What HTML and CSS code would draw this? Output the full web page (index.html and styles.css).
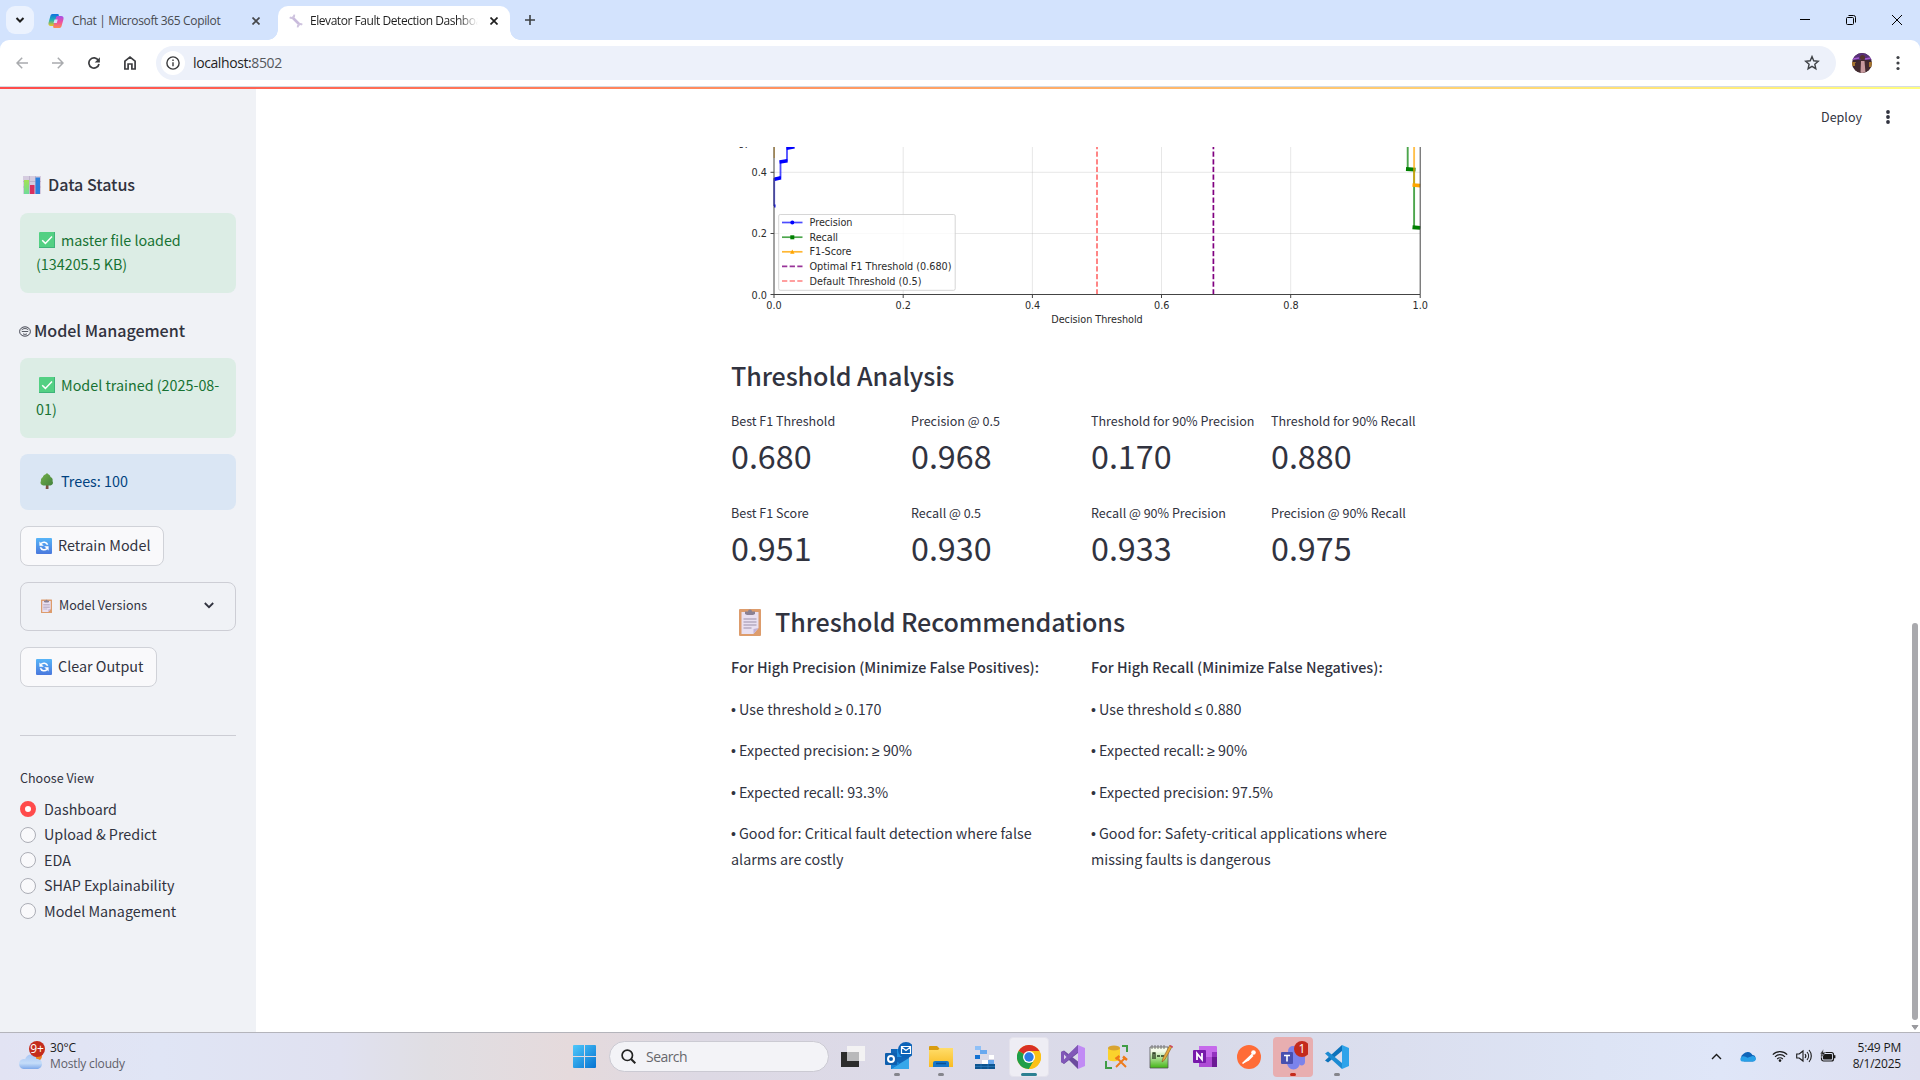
FILE: index.html
```html
<!DOCTYPE html>
<html lang="en">
<head>
<meta charset="utf-8">
<title>Elevator Fault Detection Dashboard</title>
<link rel="stylesheet" href="styles.css">
</head>
<body>
<svg width="0" height="0" class="defs">
  <defs>
    <linearGradient id="gBlue" x1="0" y1="0" x2="0" y2="1"><stop offset="0" stop-color="#57b5f8"/><stop offset="1" stop-color="#4a78dd"/></linearGradient>
    <linearGradient id="gGreenBar" x1="0" y1="0" x2="0" y2="1"><stop offset="0" stop-color="#a3e254"/><stop offset="1" stop-color="#6fdc9a"/></linearGradient>
    <linearGradient id="gTree" x1="0" y1="0" x2="1" y2="1"><stop offset="0" stop-color="#74b04a"/><stop offset="1" stop-color="#43823c"/></linearGradient>
    <linearGradient id="gWin" x1="0" y1="0" x2="1" y2="1"><stop offset="0" stop-color="#4fc8fb"/><stop offset="1" stop-color="#0673d1"/></linearGradient>
    <linearGradient id="gCloud" x1="0" y1="0" x2="0" y2="1"><stop offset="0" stop-color="#a9c6f5"/><stop offset=".6" stop-color="#c5ddf9"/><stop offset="1" stop-color="#7fa9ea"/></linearGradient>
    <linearGradient id="gFolder" x1="0" y1="0" x2="0" y2="1"><stop offset="0" stop-color="#ffdd6b"/><stop offset="1" stop-color="#f9bb21"/></linearGradient>
    <linearGradient id="gNote" x1="0" y1="0" x2="0" y2="1"><stop offset=".2" stop-color="#f4fbe9"/><stop offset="1" stop-color="#42b514"/></linearGradient>
    <linearGradient id="gCopA" x1="0" y1="0" x2="0" y2="1"><stop offset="0" stop-color="#0f6fe0"/><stop offset=".5" stop-color="#1cb2b4"/><stop offset="1" stop-color="#f2c51c"/></linearGradient>
    <linearGradient id="gCopB" x1="0" y1="0" x2="0" y2="1"><stop offset="0" stop-color="#a451e8"/><stop offset=".5" stop-color="#ef4fa0"/><stop offset="1" stop-color="#fb8c4e"/></linearGradient>
    <symbol id="check" viewBox="0 0 16 16"><rect width="16" height="16" rx="1" fill="#53d083"/><path d="M15 0h1v16H0v-1h15z" fill="#3fb37a"/><path d="M3.2 8.2l3.2 3.2 6.6-6.8" fill="none" stroke="#fff" stroke-width="1.5"/></symbol>
    <symbol id="cycle" viewBox="0 0 16 16"><rect width="16" height="16" rx="1" fill="url(#gBlue)"/><path d="M5 5.600a3.900 3.900 0 0 1 6.600 1.200M11 10.400a3.900 3.900 0 0 1-6.600-1.200" fill="none" stroke="#fff" stroke-width="1.600"/><path d="M3.400 3.400v4.400h4.400zM12.600 12.600V8.200H8.200z" fill="#fff"/></symbol>
    <symbol id="clip" viewBox="0 0 22 28"><rect y="1" width="22" height="27" rx="1" fill="#dd9c6c"/><path d="M2.500 4h17v16l-5 6h-12z" fill="#e9e0f1"/><path d="M19.500 20l-5 6v-5z" fill="#c3b2d6"/><path d="M6 6V3.400h3a2 2 0 0 1 4 0h3V6l-2 1H8z" fill="#8b8193"/><path d="M4.500 11h13M4.500 14h13M4.500 17h13M4.500 20h8" stroke="#9b8fa8" stroke-width="1"/></symbol>
  </defs>
</svg>

<header class="tabstrip">
  <span class="tab-search"><svg width="10" height="10" viewBox="0 0 10 10"><path d="M1.500 3l3.500 3.500L8.500 3" fill="none" stroke="#1f1f1f" stroke-width="2"/></svg></span>
  <div class="tab tab-idle">
    <svg width="16" height="16" viewBox="0 0 16 16"><path d="M4.500 1h5.200c1 0 1.400.8 1.100 1.700L8 11.600C7.700 12.600 7 13 6 13H2.800C.8 13 0 11.500.6 9.600L2.400 3C2.700 1.700 3.400 1 4.500 1z" fill="url(#gCopA)"/><path d="M11.500 15H6.300c-1 0-1.400-.8-1.100-1.700L8 4.400C8.300 3.400 9 3 10 3h3.200c2 0 2.800 1.500 2.200 3.400L13.600 13c-.3 1.300-1 2-2.100 2z" fill="url(#gCopB)"/><path d="M6.500 6.500h3.200L8.800 10H5.500z" fill="#d3e3fd"/></svg>
    <span class="tab-title">Chat | Microsoft 365 Copilot</span>
    <svg class="x" width="8" height="8" viewBox="0 0 8 8"><path d="M.5.5l7 7m0-7l-7 7" stroke="#45474a" stroke-width="1.700"/></svg>
  </div>
  <div class="tab tab-active">
    <svg width="14" height="14" viewBox="0 0 14 14"><path d="M3.500 3.500l7 7" stroke="#c9bbdc" stroke-width="2.600"/><path d="M.8 3.200a2.700 2.700 0 0 0 4.400-2.600M13.200 10.800a2.700 2.700 0 0 0-4.400 2.600" fill="none" stroke="#cfc4df" stroke-width="2"/></svg>
    <span class="tab-title">Elevator Fault Detection Dashboard</span>
    <svg class="x" width="8" height="8" viewBox="0 0 8 8"><path d="M.5.5l7 7m0-7l-7 7" stroke="#1f1f1f" stroke-width="1.700"/></svg>
  </div>
  <svg class="plus" width="10" height="10" viewBox="0 0 10 10"><path d="M5 0v10M0 5h10" stroke="#3c4043" stroke-width="1.600"/></svg>
  <div class="window-buttons">
    <svg width="10" height="10" viewBox="0 0 10 10"><path d="M0 4.500h10" stroke="#000"/></svg>
    <svg width="10" height="10" viewBox="0 0 10 10"><rect x=".5" y="2.500" width="7" height="7" rx="1" fill="none" stroke="#000"/><path d="M2.500.5h5a2 2 0 0 1 2 2v5" fill="none" stroke="#000"/></svg>
    <svg width="10" height="10" viewBox="0 0 10 10"><path d="M0 0l10 10M10 0L0 10" stroke="#000"/></svg>
  </div>
</header>

<nav class="toolbar-wrap"><div class="toolbar">
  <svg width="12" height="12" viewBox="0 0 12 12"><path d="M12 6H1.200M6.200.8L1 6l5.200 5.200" fill="none" stroke="#a9abae" stroke-width="1.500"/></svg>
  <svg width="12" height="12" viewBox="0 0 12 12"><path d="M0 6h10.800M5.800.8L11 6l-5.200 5.200" fill="none" stroke="#a9abae" stroke-width="1.500"/></svg>
  <svg width="12" height="12" viewBox="0 0 12 12"><path d="M10.400 3.400A5.100 5.100 0 1 0 11 7" fill="none" stroke="#3c3d40" stroke-width="1.700"/><path d="M11.900.2v5.200H6.700z" fill="#3c3d40"/></svg>
  <svg width="12" height="14" viewBox="0 0 12 14"><path d="M.9 13V5.200L6 1.200l5.100 4V13H7.900V8H4.100v5z" fill="none" stroke="#3c3d40" stroke-width="1.700"/></svg>
  <div class="omnibox">
    <span class="site-info"><svg width="14" height="14" viewBox="0 0 14 14"><circle cx="7" cy="7" r="6.100" fill="none" stroke="#3a3b3d" stroke-width="1.400"/><path d="M7 6.200v4M7 3.600v1.500" stroke="#3a3b3d" stroke-width="1.400"/></svg></span>
    <span class="url">localhost:<i>8502</i></span>
    <svg class="star" width="16" height="16" viewBox="0 0 16 16"><path d="M8 1.600l1.700 4.200 4.500.4-3.400 3 1 4.500L8 11.300l-3.900 2.400 1-4.500-3.400-3 4.500-.4z" fill="none" stroke="#3f4246" stroke-width="1.400"/></svg>
  </div>
  <svg class="avatar" width="20" height="20" viewBox="0 0 20 20"><clipPath id="av"><circle cx="10" cy="10" r="10"/></clipPath><g clip-path="url(#av)"><rect width="20" height="20" fill="#3b2631"/><path d="M0 0h20v7H0z" fill="#593078"/><path d="M1 6l6-1M13 6l6-1" stroke="#a45ad0" stroke-width="1.500"/><path d="M0 9h4v4H0zM17 9h3v5h-3z" fill="#a5752f"/><path d="M3 20V10l5-3h5l4 3v10z" fill="#432b30"/><path d="M9 8h3.500l1 12H8.500z" fill="#c79a9e"/><circle cx="10.500" cy="4.500" r="2.500" fill="#56342c"/></g></svg>
  <svg class="menu" width="4" height="16" viewBox="0 0 4 16"><g fill="#3f4246"><circle cx="2" cy="2.500" r="1.600"/><circle cx="2" cy="8" r="1.600"/><circle cx="2" cy="13.500" r="1.600"/></g></svg>
</div></nav>

<div class="page">
  <div class="decoration"></div>
  <aside class="sidebar">
    <h3 class="side-head"><svg class="e18" width="18" height="18" viewBox="0 0 18 18"><rect width="18" height="18" fill="#d5ccdf"/><path d="M0 5.500h18M0 11h18M6.500 0v18M12.500 0v18" stroke="#b9adc8" stroke-width=".8"/><rect x="1" y="4" width="5" height="14" fill="url(#gGreenBar)"/><rect x="7" y="9" width="4.500" height="9" fill="#d8305f"/><rect x="12.500" y="1.500" width="4.500" height="16.500" fill="#2c80dc"/></svg><span>Data Status</span></h3>
    <div class="alert ok"><svg class="e16" width="16" height="16"><use href="#check"/></svg>master file loaded (134205.5 KB)</div>
    <h3 class="side-head second"><svg class="face" width="12" height="11" viewBox="0 0 12 11"><ellipse cx="6" cy="5.500" rx="5.400" ry="4.700" fill="none" stroke="#31333f" stroke-width=".9"/><path d="M2.500 4.200c1.500-2.200 5.500-2.200 7 0M2.800 5.500h6.400M4 7.800c1.500.8 2.500.8 4 0" fill="none" stroke="#31333f" stroke-width=".8"/></svg><span>Model Management</span></h3>
    <div class="alert ok"><svg class="e16" width="16" height="16"><use href="#check"/></svg>Model trained (2025-08-01)</div>
    <div class="alert info"><svg class="e16" width="16" height="16" viewBox="0 0 16 16"><path d="M7 11h2.500v5H6.700z" fill="#7c5241"/><path d="M8 0c1 1.500 3.500 2 3.500 4 2 1 2.600 2.600 2 4 1 1.500.5 4-2 4.500H4.500C2 12 .8 10 2 8c-.5-1.500.5-3 2-4C4 2 7 1.500 8 0z" fill="url(#gTree)"/></svg>Trees: 100</div>
    <button class="btn b1"><svg width="16" height="16"><use href="#cycle"/></svg><span>Retrain Model</span></button>
    <div class="expander"><svg width="11" height="14"><use href="#clip"/></svg><span>Model Versions</span><svg class="chev" width="10" height="7" viewBox="0 0 10 7"><path d="M.8 1L5 5.200 9.200 1" fill="none" stroke="#31333f" stroke-width="1.800"/></svg></div>
    <button class="btn b2"><svg width="16" height="16"><use href="#cycle"/></svg><span>Clear Output</span></button>
    <hr>
    <div class="radio-label">Choose View</div>
    <ul class="radios">
      <li class="on"><i></i>Dashboard</li>
      <li><i></i>Upload &amp; Predict</li>
      <li><i></i>EDA</li>
      <li><i></i>SHAP Explainability</li>
      <li><i></i>Model Management</li>
    </ul>
  </aside>

  <main class="main">
    <div class="app-header"><span>Deploy</span><svg width="4" height="14" viewBox="0 0 4 14"><g fill="#31333f"><circle cx="2" cy="2" r="1.900"/><circle cx="2" cy="7" r="1.900"/><circle cx="2" cy="12" r="1.900"/></g></svg></div>
    <div class="content">
      <svg class="chart" width="704" height="213" viewBox="731 147 704 213">
        <g stroke="#b0b0b0" stroke-opacity=".3" stroke-width="1"><path d="M903.200 147v147.500M1032.400 147v147.500M1161.500 147v147.500M1290.700 147v147.500M774 172.300h646.200M774 233.500h646.200"/></g>
        <path d="M774.200 147v11" stroke="#ffa500" stroke-width="1.300" stroke-opacity=".7"/>
        <g fill="none" stroke="#00f" stroke-opacity=".7" stroke-width="1.800"><path d="M774.200 206v-27l6.300-1.500V162l6.500-1.500V148l8-2"/></g>
        <g fill="none" stroke="#00f" stroke-width="3.500"><path d="M774.500 179.200l6.500-1.400M779.500 162.100l8-1.300M786.500 148.200l8-1.500"/><path d="M774 204.500h1.500v3H774z" stroke="none" fill="#00f"/></g>
        <g fill="none" stroke="#008000"><path d="M1407.700 147v22l6.400.5v58l6.100.5" stroke-opacity=".7" stroke-width="1.900"/><path d="M1406 169l9.500.6M1412.500 227.200l7.700.7" stroke-width="3.900"/></g>
        <g fill="none" stroke="#ffa500"><path d="M1414.100 147v38" stroke-opacity=".7" stroke-width="1.900"/><path d="M1412.500 185l7.700.6" stroke-width="3.700"/></g>
        <path d="M1097 294.500V147" stroke="#f00" stroke-opacity=".5" stroke-width="1.900" stroke-dasharray="5.300 2.350"/>
        <path d="M1213.400 294.500V147" stroke="#800080" stroke-width="1.700" stroke-dasharray="5.300 2.350"/>
        <path d="M774 147v147.500h646.200V147M774 294.500v3.500M903.200 294.500v3.500M1032.400 294.500v3.500M1161.500 294.500v3.500M1290.700 294.500v3.500M1420.200 294.500v3.500M770.500 294.500h3.500M770.500 233.500h3.500M770.500 172.300h3.500" fill="none" stroke="#444" stroke-width="1"/>
        <rect x="778.700" y="214.500" width="176.500" height="75.800" rx="1.500" fill="#fff" fill-opacity=".8" stroke="#ccc" stroke-opacity=".8"/>
        <g stroke-width="1.700"><path d="M782 222.500h20.500" stroke="#00f" stroke-opacity=".7"/><path d="M782 237.200h20.500" stroke="#008000" stroke-opacity=".7"/><path d="M782 251.800h20.500" stroke="#ffa500" stroke-opacity=".8"/><path d="M782 266.300h20.500" stroke="#800080" stroke-opacity=".8" stroke-dasharray="5.300 2.350"/><path d="M782 281h20.500" stroke="#f00" stroke-opacity=".5" stroke-dasharray="5.300 2.350"/></g>
        <circle cx="792.300" cy="222.500" r="2" fill="#00f"/><rect x="790.300" y="235.300" width="4" height="4" fill="#008000"/><path d="M792.300 249.400l2.200 4.300h-4.400z" fill="#ffa500"/>
        <g class="plot-text">
          <text x="809.500" y="226" textLength="43">Precision</text><text x="809.500" y="240.600" textLength="28.500">Recall</text><text x="809.500" y="255.300" textLength="42">F1-Score</text><text x="809.500" y="269.800" textLength="142">Optimal F1 Threshold (0.680)</text><text x="809.500" y="284.500" textLength="112">Default Threshold (0.5)</text>
          <g text-anchor="middle"><text x="774" y="309.300">0.0</text><text x="903.200" y="309.300">0.2</text><text x="1032.600" y="309.300">0.4</text><text x="1161.700" y="309.300">0.6</text><text x="1291" y="309.300">0.8</text><text x="1420.200" y="309.300">1.0</text><text x="1097" y="323" textLength="91.500">Decision Threshold</text></g>
          <g text-anchor="end"><text x="767" y="176.400">0.4</text><text x="767" y="237.400">0.2</text><text x="767" y="298.600">0.0</text></g>
          <text transform="translate(746.500 148.800) rotate(-90)">Score</text>
        </g>
      </svg>
      <h2><span>Threshold Analysis</span></h2>
      <div class="metrics">
        <div><label>Best F1 Threshold</label><b>0.680</b></div>
        <div><label>Precision @ 0.5</label><b>0.968</b></div>
        <div><label>Threshold for 90% Precision</label><b>0.170</b></div>
        <div><label>Threshold for 90% Recall</label><b>0.880</b></div>
        <div><label>Best F1 Score</label><b>0.951</b></div>
        <div><label>Recall @ 0.5</label><b>0.930</b></div>
        <div><label>Recall @ 90% Precision</label><b>0.933</b></div>
        <div><label>Precision @ 90% Recall</label><b>0.975</b></div>
      </div>
      <h2 class="rec"><svg width="22" height="28"><use href="#clip"/></svg><span>Threshold Recommendations</span></h2>
      <div class="advice">
        <section>
          <p class="strong">For High Precision (Minimize False Positives):</p>
          <p><i class="dot">•</i>Use threshold <i class="sym">≥</i> 0.170</p>
          <p><i class="dot">•</i>Expected precision: <i class="sym">≥</i> 90%</p>
          <p><i class="dot">•</i>Expected recall: 93.3%</p>
          <p><i class="dot">•</i>Good for: Critical fault detection where false alarms are costly</p>
        </section>
        <section>
          <p class="strong">For High Recall (Minimize False Negatives):</p>
          <p><i class="dot">•</i>Use threshold <i class="sym">≤</i> 0.880</p>
          <p><i class="dot">•</i>Expected recall: <i class="sym">≥</i> 90%</p>
          <p><i class="dot">•</i>Expected precision: 97.5%</p>
          <p><i class="dot">•</i>Good for: Safety-critical applications where missing faults is dangerous</p>
        </section>
      </div>
    </div>
  </main>
  <div class="scrollbar"><span class="thumb"></span><svg width="8" height="5" viewBox="0 0 8 5"><path d="M1 .5h6L4 4.500z" fill="#9a9a9e" stroke="#9a9a9e"/></svg></div>
</div>

<footer class="taskbar">
  <div class="weather">
    <svg width="28" height="30" viewBox="0 0 28 30"><circle cx="19" cy="15" r="5" fill="#f08020"/><path d="M5.500 28a5 5 0 0 1-1-9.700c1-.3 2-.3 2.600 0C8 15 10.500 13.500 13 13.500s5 1.700 5.500 4.500c4 0 5.500 2.500 5.500 5s-2 5-5 5z" fill="url(#gCloud)"/><circle cx="19" cy="8" r="8" fill="#c42b1c"/><text x="19" y="12" text-anchor="middle" class="badge-text">9+</text></svg>
    <div><span>30°C</span><em>Mostly cloudy</em></div>
  </div>
  <svg class="win" width="23" height="23" viewBox="0 0 23 23"><path d="M0 1a1 1 0 0 1 1-1h10v11H0zM12 0h10a1 1 0 0 1 1 1v10H12zM0 12h11v11H1a1 1 0 0 1-1-1zM12 12h11v10a1 1 0 0 1-1 1H12z" fill="url(#gWin)"/></svg>
  <div class="search"><svg width="15" height="15" viewBox="0 0 15 15"><circle cx="6.300" cy="6.300" r="5.200" fill="none" stroke="#222" stroke-width="1.700"/><path d="M10 10l4.300 4.300" stroke="#222" stroke-width="2"/></svg><span>Search</span></div>
  <div class="apps">
    <span><svg width="24" height="24" viewBox="0 0 24 24"><path d="M0 7h18v15H0z" fill="#2c2c2c"/><path d="M6 1h18v15H6z" fill="#f3f3f3" fill-opacity=".95"/><path d="M6 7h12v9H6z" fill="#b9b9bb"/></svg></span>
    <span class="run outlook"><svg width="30" height="30" viewBox="0 0 30 30"><path d="M9 8h13v6l5-1v15H9z" fill="#1066b8"/><path d="M15 8h7v8h-7z" fill="#1f8fe0"/><path d="M9 28l18-11v11z" fill="#36a7ea"/><path d="M9 17l9 5.500L9 28z" fill="#1482d5"/><rect x="3" y="12" width="12" height="12" rx="1" fill="#0f5fae"/><circle cx="9" cy="18" r="3" fill="none" stroke="#fff" stroke-width="2"/><circle cx="24" cy="9" r="8" fill="#0c63b8"/><path d="M19.500 5.500h9v7h-9zM19.500 6l4.500 3.500L28.500 6" fill="none" stroke="#fff" stroke-width="1.200"/></svg></span>
    <span class="run"><svg width="24" height="24" viewBox="0 0 24 24"><path d="M0 2a1 1 0 0 1 1-1h7l3 3v4H0z" fill="#d99c10"/><path d="M0 5h9l2-2h13v19H0z" fill="url(#gFolder)"/><path d="M4 22v-4a2 2 0 0 1 2-2h12a2 2 0 0 1 2 2v4z" fill="#1576c8"/><path d="M7 18.500h10" stroke="#0b4f92" stroke-width="1.500"/></svg></span>
    <span><svg width="22" height="24" viewBox="0 0 22 24"><path d="M1 1h6v4H1z" fill="#8fc0f7"/><path d="M6 5h7v4H6z" fill="#6aa9ef"/><path d="M1 10h5v4H1z" fill="#1672d2"/><path d="M15 10h5v4h-5z" fill="#fff"/><path d="M8 15h6v4H8z" fill="#fff"/><path d="M14 15h6v4h-6z" fill="#6aa9ef"/><path d="M1 19h20v5H1z" fill="#0e548f"/><path d="M1 21.500h20M7 19v5M14 19v5" stroke="#2f80c4" stroke-width=".6"/></svg></span>
    <span class="tile chrome"><svg width="24" height="24" viewBox="0 0 24 24"><circle cx="12" cy="12" r="12" fill="#fbc116"/><path d="M12 12L1.600 6a12 12 0 0 1 20.800 0H12z" fill="#d93025"/><path d="M1.600 6a12 12 0 0 0 10.400 18l5.200-9L12 12z" fill="#1e9e4a"/><path d="M12 24a12 12 0 0 0 10.400-18H12l5.200 9z" fill="#fbc116"/><circle cx="12" cy="12" r="6" fill="#fff"/><circle cx="12" cy="12" r="4.700" fill="#2c7be5"/></svg></span>
    <span><svg width="24" height="24" viewBox="0 0 24 24"><path d="M17 0l7 3v18l-7 3z" fill="#c18bf5"/><path d="M17 0v8L3 19l-3-2V7l3-1.500 14 11V24L3.500 10.500v4z" fill="#6b4a9e"/><path d="M17 0L6.500 10 3 6 0 7v10l3 1.500L17 7z" fill="#8157b8"/><path d="M3 9.500v5L5.500 12z" fill="#ddd7ea"/></svg></span>
    <span><svg width="24" height="24" viewBox="0 0 24 24"><path d="M3 3v11c0 3 12 3 12 0V3z" fill="#fbd22c"/><ellipse cx="9" cy="3" rx="6" ry="2.500" fill="#d9a431"/><path d="M17 1h5v6M1 16v7h6" fill="none" stroke="#3f9c45" stroke-width="2"/><path d="M12 13l9 9M20 13l-9 9" stroke="#ee7a1a" stroke-width="1.900"/><path d="M10.500 14l4-3M18 11.500l4 3.500" stroke="#ee7a1a" stroke-width="2.400"/></svg></span>
    <span><svg width="24" height="24" viewBox="0 0 24 24"><path d="M1 2h18v21H1z" fill="url(#gNote)" stroke="#555" stroke-width=".8"/><path d="M3 0v4M6 0v4M9 0v4M12 0v4M15 0v4" stroke="#777" stroke-width="1"/><path d="M4 14V8h2v6M8 11h3M12 11h3" stroke="#263a1b" stroke-width="1.300" fill="none"/><path d="M13 17l1-4 6.500-12.500 2.500 1.300-7 12.700z" fill="#e4a93b" stroke="#7a4a1a" stroke-width=".5"/><path d="M20.500 1l1-1 2.500 1.500-.5 1.500z" fill="#d0455b"/></svg></span>
    <span><svg width="24" height="24" viewBox="0 0 24 24"><path d="M6 1h17a1 1 0 0 1 1 1v20H6z" fill="#c66aeb"/><path d="M19 7h5v5h-5z" fill="#9332bf"/><path d="M19 12h5v10h-5z" fill="#6b1a94"/><path d="M6 12h13v10H6z" fill="#ae4bd5"/><rect y="5" width="13" height="13" rx="1" fill="#7719aa"/><path d="M4 15V8.500l5 6V8" fill="none" stroke="#fff" stroke-width="1.800"/></svg></span>
    <span><svg width="24" height="24" viewBox="0 0 24 24"><circle cx="12" cy="12" r="12" fill="#ff6c37"/><path d="M5.500 19l4.500-5 5-4.500 1.500 1.500-4.500 4.500z" fill="#fff"/><path d="M5.500 18.500l10-9.500" stroke="#fff" stroke-width="1.500"/><circle cx="16.500" cy="7.500" r="2.300" fill="#fff"/></svg></span>
    <span class="tile teams"><svg width="30" height="30" viewBox="0 0 30 30"><circle cx="15" cy="10" r="5" fill="#7b83eb"/><path d="M9 14h13v8a6 6 0 0 1-13 0zM22 14h5v7c0 3-3 4-5 3z" fill="#7b83eb"/><rect x="3" y="11" width="12" height="12" rx="1" fill="#4850b0"/><path d="M6 14.500h6M9 14.500v6" stroke="#fff" stroke-width="1.600"/><circle cx="24" cy="8" r="8" fill="#c42b1c"/><text x="24" y="12" text-anchor="middle" class="badge-text">1</text></svg></span>
    <span class="run"><svg width="24" height="24" viewBox="0 0 24 24"><path d="M17 0v6L3 17.500 0 15.500 17 0z" fill="#0c72bb"/><path d="M0 8.500l3-2L17 18v6z" fill="#1b8ad2"/><path d="M17 0l7 3v18l-7 3z" fill="#2da3ea"/></svg></span>
  </div>
  <div class="tray">
    <svg width="11" height="7" viewBox="0 0 11 7"><path d="M1 6l4.500-4.500L10 6" fill="none" stroke="#1a1a1a" stroke-width="1.400"/></svg>
    <svg class="od" width="16" height="11" viewBox="0 0 16 11"><path d="M4 10.500a4 4 0 0 1-.7-7.400A5.500 5.500 0 0 1 12.500 4a3.300 3.300 0 0 1 .5 6.500z" fill="#0f64b8"/><path d="M3 10.500C0 10.500-.5 7 2 5.700c2-1 4 .3 5.500 1L12.500 5c3 0 4.500 3 2.500 4.800-.7.700-1.500.7-2.500.7z" fill="#28a0e8"/></svg>
    <svg class="wifi" width="16" height="12" viewBox="0 0 16 12"><path d="M.8 4.600a10 10 0 0 1 14.400 0M3 6.800a7 7 0 0 1 10 0M5.200 9a4 4 0 0 1 5.600 0" fill="none" stroke="#1a1a1a" stroke-width="1.200"/><circle cx="8" cy="10.600" r="1.300" fill="#1a1a1a"/></svg>
    <svg class="snd" width="17" height="14" viewBox="0 0 17 14"><path d="M.7 5v4h2.500L7 12V2L3.200 5zM9 5a3 3 0 0 1 0 4M11 3a6 6 0 0 1 0 8M13 1a9 9 0 0 1 0 12" fill="none" stroke="#1a1a1a" stroke-width="1.100"/></svg>
    <svg class="bat" width="16" height="14" viewBox="0 0 16 14"><rect x="1.500" y="3.500" width="12" height="8.500" rx="2" fill="none" stroke="#1a1a1a" stroke-width="1.200"/><rect x="3" y="5" width="9" height="5.500" rx=".8" fill="#1a1a1a"/><path d="M14.500 6.200v3" stroke="#1a1a1a" stroke-width="1.800"/><path d="M3.500 0L0 5h2.300L1.500 8.500 5.500 3.500H3z" fill="#1a1a1a" stroke="#e0e4f4" stroke-width=".5"/></svg>
    <div class="clock"><span>5:49 PM</span><span>8/1/2025</span></div>
  </div>
</footer>
</body>
</html>
```
FILE: styles.css
```css
* { box-sizing: border-box; margin: 0; padding: 0; }
body { width: 1920px; height: 1080px; overflow: hidden; display: flex; flex-direction: column; background: #fff; font-family: "Noto Sans CJK SC", "Noto Sans", sans-serif; font-size: 14.33px; color: #31333f; }
svg { display: block; flex: none; }
.defs { position: absolute; }
i, em { font-style: normal; }

/* browser tab strip */
.tabstrip { height: 40px; flex: none; background: #d3e3fd; display: flex; align-items: flex-start; padding-left: 6px; font-family: "Open Sans", "Noto Sans", sans-serif; font-size: 12px; }
.tab-search { width: 28px; height: 28px; margin-top: 6px; border-radius: 9px; background: #ebf2fe; display: flex; align-items: center; justify-content: center; }
.tab { height: 34px; margin-top: 6px; display: flex; align-items: center; padding-bottom: 4px; white-space: nowrap; }
.tab-title { padding-bottom: 1px; }
.tab-idle { width: 230px; margin-left: 14px; color: #474a4f; }
.tab-idle .tab-title { margin-left: 8px; width: 180px; letter-spacing: -.35px; }
.tab-active { width: 232px; padding-left: 11px; border-radius: 10px 10px 0 0; background: #fff; color: #1f1f1f; position: relative; }
.tab-active::before, .tab-active::after { content: ""; position: absolute; bottom: 0; width: 10px; height: 10px; }
.tab-active::before { left: -10px; background: radial-gradient(circle at 0 0, transparent 9.500px, #fff 10px); }
.tab-active::after { right: -10px; background: radial-gradient(circle at 100% 0, transparent 9.500px, #fff 10px); }
.tab-active .tab-title { margin-left: 7px; width: 168px; margin-right: 12px; overflow: hidden; letter-spacing: -.45px; -webkit-mask-image: linear-gradient(90deg, #000 88%, transparent); mask-image: linear-gradient(90deg, #000 88%, transparent); }
.plus { margin: 15px 0 0 15px; }
.window-buttons { margin: 15px 18px 0 auto; display: flex; gap: 36px; }

/* toolbar */
.toolbar-wrap { height: 47px; flex: none; background: #d3e3fd; }
.toolbar { height: 47px; background: #fff; border-radius: 9px 9px 0 0; border-bottom: 1px solid #d5dbe3; display: flex; align-items: center; gap: 24px; padding-left: 16px; }
.omnibox { width: 1680px; height: 34px; margin-left: -4px; border-radius: 17px; background: #edf1fa; display: flex; align-items: center; padding: 0 16px 0 5px; }
.site-info { width: 24px; height: 24px; border-radius: 50%; background: #fff; display: flex; align-items: center; justify-content: center; }
.url { margin-left: 8px; padding-bottom: 1px; font: 14px "Open Sans", sans-serif; letter-spacing: -.4px; color: #1f1f1f; }
.url i { color: #55585d; }
.star { margin-left: auto; }
.avatar { margin-left: -8px; }

/* app frame */
.page { height: 945px; flex: none; display: flex; position: relative; }
.decoration { position: absolute; top: 0; left: 0; width: 100%; height: 2px; background: linear-gradient(90deg, #ff4b4b, #fffd80); z-index: 2; }
.sidebar { width: 256px; background: #f0f2f6; padding: 86px 20px 0; display: flex; flex-direction: column; align-items: flex-start; }
.side-head { height: 24px; display: flex; align-items: center; margin-bottom: 16px; font-size: 16.1px; font-weight: 500; white-space: nowrap; line-height: 24px; }
.side-head span { padding-bottom: 2px; letter-spacing: -.04px; }
.side-head .e18 { margin: 0 7px 0 3px; }
.side-head .face { margin-right: 3px; margin-left: -1px; }
.side-head.second { margin: 26px 0 15px; }
.alert { width: 216px; padding: 15px 12px 17px 16px; line-height: 24px; border-radius: 8px; }
.alert .e16 { display: inline-block; vertical-align: -2px; margin: 0 6px 0 3px; }
.ok { background: #dcede5; color: #177233; }
.info { background: #dae6f4; color: #004280; margin-top: 16px; }
.btn { height: 40px; margin-top: 16px; padding: 0 0 1px 15px; border: 1px solid #d0d2d8; border-radius: 8px; background: #f9f9fb; color: inherit; font: inherit; display: flex; align-items: center; gap: 6px; white-space: nowrap; }
.btn span { padding-bottom: 2px; }
.b1 { width: 144px; }
.b2 { width: 137px; }
.expander { width: 216px; height: 49px; margin-top: 16px; border: 1px solid #cdced5; border-radius: 8px; display: flex; align-items: center; padding: 0 21px 2px 20px; font-size: 12.54px; }
.expander span { margin-left: 7px; padding-bottom: 2px; }
.chev { margin-left: auto; }
hr { width: 216px; margin-top: 48px; border: 0; height: 1px; background: #cccdd4; }
.radio-label { height: 20px; line-height: 20px; margin-top: 32px; font-size: 12.54px; }
.radios { list-style: none; margin-top: 8.500px; }
.radios li { height: 25.600px; line-height: 24px; display: flex; gap: 8px; }
.radios i { width: 16px; height: 16px; margin-top: 4.500px; border-radius: 50%; border: 1px solid #acaeb6; background: #f9f9fb; }
.radios .on i { border: 5px solid #ff4b4b; background: #fff; }

.main { width: 1654px; display: flex; flex-direction: column; align-items: center; }
.app-header { width: 100%; height: 60px; display: flex; align-items: center; justify-content: flex-end; gap: 24px; padding-right: 20px; font-size: 12.54px; }
.app-header span { padding-bottom: 2px; }
.content { width: 704px; }
.plot-text { font-family: "DejaVu Sans", sans-serif; font-size: 9.700px; fill: #2b2b2b; }
h2 { height: 34px; line-height: 30px; font-size: 25.08px; font-weight: 500; letter-spacing: -.1px; white-space: nowrap; }
.metrics { margin-top: 18px; display: grid; grid-template-columns: repeat(4, 164px); column-gap: 16px; row-gap: 25px; }
.metrics label { display: block; height: 20px; line-height: 18px; font-size: 12.54px; white-space: nowrap; }
.metrics b { display: block; margin-top: 4px; height: 43px; line-height: 39px; font-size: 32.25px; font-weight: 400; }
.rec { margin-top: 34px; display: flex; align-items: center; }
.rec svg { margin: -1px 14px 0 8px; }
.rec span { padding-bottom: 3px; }
.advice { margin-top: 15px; display: grid; grid-template-columns: 344px 344px; gap: 16px; line-height: 25.600px; }
.advice p { margin-bottom: 16px; height: 25.600px; }
.advice section { width: 330px; }
.strong { font-weight: 500; letter-spacing: .035px; white-space: nowrap; }
.dot, .sym { font-family: "Liberation Sans", sans-serif; font-size: 14px; line-height: 1; }
.dot { display: inline-block; width: 8px; }

.scrollbar { width: 10px; padding: 536px 0 0 2px; }
.thumb { display: block; width: 6px; height: 397px; border-radius: 3px; background: #a9a9ad; margin-bottom: 5px; }
.scrollbar svg { margin-left: -1px; }

/* taskbar */
.taskbar { height: 48px; flex: none; border-top: 1px solid #b4b4bb; background: linear-gradient(90deg, #e2e3f3 0, #e0e5f5 160px, #e0e1f0 340px, #e0dee3 430px, #e5dadc 570px, #ddd9e4 700px, #dcdae8 900px, #d9dae9 1200px, #dde4f5 1600px, #dfe6f8 1720px, #dedff0 1920px); display: flex; align-items: center; font-family: "Open Sans", sans-serif; font-size: 12px; color: #1a1a1a; padding-left: 18px; }
.weather { width: 555px; display: flex; align-items: center; padding-bottom: 2px; }
.weather > div { margin-left: 4px; line-height: 16px; letter-spacing: -.15px; }
.weather span, .weather em { display: block; }
.weather em { color: #5f5f6a; }
.badge-text { font: 12px "Open Sans", sans-serif; fill: #fff; }
.search { width: 220px; height: 31px; margin-left: 13px; border: 1px solid #cbcad3; border-radius: 16px; background: #f3f3f7; display: flex; align-items: center; padding: 0 0 1px 11px; font-size: 14px; color: #67676c; }
.search span { margin-left: 10px; letter-spacing: -.55px; }
.apps { display: flex; margin-left: 2px; }
.apps > span { width: 40px; height: 40px; margin: 0 2px; border-radius: 4px; display: flex; align-items: center; justify-content: center; position: relative; }
.apps .run::after, .apps .tile::after { content: ""; position: absolute; left: 17px; bottom: 1px; width: 6px; height: 3px; border-radius: 2px; background: #85858c; }
.apps .outlook { padding: 0 1px 2px 0; }
.apps .tile.chrome { background: #eeedf4; border: 1px solid #e4e2ec; }
.apps .tile.chrome::after { left: 11px; bottom: 0; width: 16px; background: #2b8092; }
.apps .tile.teams { background: #e8aeb0; padding: 0 1px 2px 0; }
.apps .tile.teams::after { background: #c42b1c; }
.tray { margin-left: auto; padding: 0 19px 1px 0; display: flex; align-items: center; }
.od { margin-left: 18px; }
.wifi { margin-left: 16px; }
.snd { margin-left: 8px; }
.bat { margin-left: 7px; }
.clock { width: 65px; text-align: right; line-height: 16px; letter-spacing: -.2px; }
.clock span { display: block; }
```
